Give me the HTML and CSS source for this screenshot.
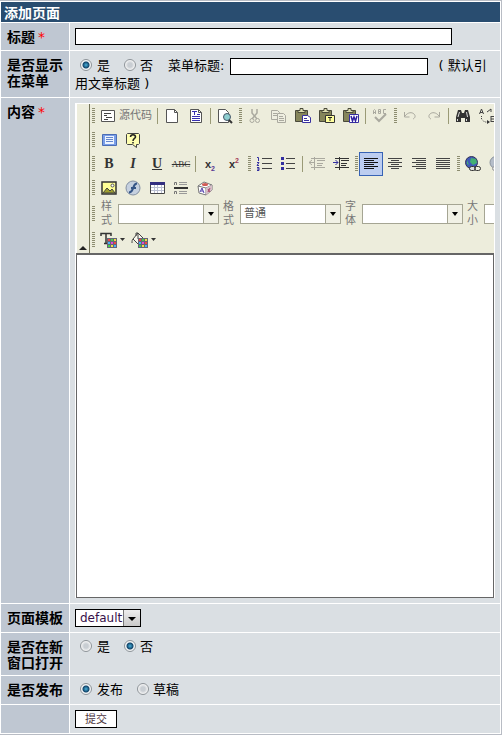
FILE: index.html
```html
<!DOCTYPE html>
<html lang="zh-CN">
<head>
<meta charset="utf-8">
<title>添加页面</title>
<link rel="stylesheet" href="styles.css">
</head>
<body>
<form class="panel">
  <h1 class="panel-title">添加页面</h1>

  <div class="row row-title">
    <label class="name" for="title">标题<span class="req">*</span></label>
    <div class="value"><input class="text title-input" id="title" type="text"></div>
  </div>

  <div class="row row-menu">
    <div class="name">是否显示在菜单</div>
    <div class="value">
      <label class="choice"><input type="radio" name="menu" checked>是</label><label class="choice"><input type="radio" name="menu">否</label><label class="menu-label" for="menu-title">菜单标题:</label><input class="text menu-input" id="menu-title" type="text"><span class="hint">( 默认引用文章标题 )</span>
    </div>
  </div>

  <div class="row row-content">
    <label class="name" for="content">内容<span class="req">*</span></label>
    <div class="value">
      <div class="editor">
        <div class="tools">
          <button class="collapse" type="button" aria-label="收起工具栏"></button>
          <div class="bars">
            <div class="bar">
              <i class="grip"></i>
              <button class="tool source" type="button"><svg width="16" height="16" viewBox="0 0 16 16"><path d="M1.500 2.500h13v11h-13z" fill="#fff" stroke="#555"/><path d="M4 5.500h7M4 7.500h3M6 9.500h6M4 11.500h4" stroke="#444"/></svg><span>源代码</span></button>
              <i class="sep"></i>
              <button class="tool" type="button" aria-label="新建"><svg width="16" height="16" viewBox="0 0 16 16"><path d="M2.500 1.500h8l3 3v10h-11z" fill="#fff" stroke="#555"/><path d="M10.500 1.500v3h3" fill="none" stroke="#555"/></svg></button>
              <button class="tool" type="button" aria-label="模板"><svg width="16" height="16" viewBox="0 0 16 16"><path d="M2.500 1.500h8l3 3v10h-11z" fill="#fff" stroke="#555"/><path d="M4 3.500h5M6.500 3v4M9 6.500h3M4 8.500h8M4 10.500h8M4 12.500h8" stroke="#3830b0"/><path d="M10.500 1.500v3h3" fill="none" stroke="#555"/></svg></button>
              <i class="sep"></i>
              <button class="tool" type="button" aria-label="预览"><svg width="16" height="16" viewBox="0 0 16 16"><path d="M1.500 1.500h7l3 3v10h-10z" fill="#fff" stroke="#555"/><circle cx="10" cy="9" r="3.500" fill="#8fcfd0" stroke="#456"/><path d="M12 12l3 3" stroke="#333" stroke-width="2"/></svg></button>
              <i class="grip"></i>
              <button class="tool" type="button" aria-label="剪切"><svg width="16" height="16" viewBox="0 0 16 16" fill="none" stroke="#aaa99f"><path d="M5 1v4l5 6M10 1v4l-5 6" stroke-width="1.500"/><circle cx="5" cy="12.500" r="2"/><circle cx="10.500" cy="12.500" r="2"/></svg></button>
              <button class="tool" type="button" aria-label="复制"><svg width="16" height="16" viewBox="0 0 16 16" fill="#eeeee0" stroke="#aaa99f"><path d="M.5 2.500h6l2 2v7h-8z"/><path d="M2 5.500h4M2 7.500h4"/><path d="M6.500 5.500h6l2 2v7h-8z"/><path d="M8 8.500h4M8 10.500h5M8 12.500h5"/></svg></button>
              <button class="tool" type="button" aria-label="粘贴"><svg width="16" height="16" viewBox="0 0 16 16"><path d="M.5 2.500h12v11h-12z" fill="#85855a" stroke="#49493a"/><path d="M3 4.500v-2h2v-2h3v2h2v2z" fill="#dedeb0" stroke="#49493a"/><path d="M7.500 7.500h5l3 2v5h-8z" fill="#fff" stroke="#3830a0"/><path d="M9 10.500h3M9 12.500h5" stroke="#3830a0"/></svg></button>
              <button class="tool" type="button" aria-label="粘贴文本"><svg width="16" height="16" viewBox="0 0 16 16"><path d="M.5 2.500h12v11h-12z" fill="#85855a" stroke="#49493a"/><path d="M3 4.500v-2h2v-2h3v2h2v2z" fill="#dedeb0" stroke="#49493a"/><path d="M6.500 7.500h9v7h-9z" fill="#ffff9c" stroke="#333"/><path d="M9 9.500h4M11 9v4" stroke="#222"/></svg></button>
              <button class="tool" type="button" aria-label="从 Word 粘贴"><svg width="16" height="16" viewBox="0 0 16 16"><path d="M.5 2.500h12v11h-12z" fill="#85855a" stroke="#49493a"/><path d="M3 4.500v-2h2v-2h3v2h2v2z" fill="#dedeb0" stroke="#49493a"/><path d="M6.500 6.500h9v8h-9z" fill="#fff" stroke="#3830a0"/><path d="M8 8l1.500 5 1.500-4 1.500 4L14 8" fill="none" stroke="#3020a0" stroke-width="1.500"/></svg></button>
              <i class="sep"></i>
              <button class="tool" type="button" aria-label="拼写检查"><svg width="16" height="16" viewBox="0 0 16 16" fill="none" stroke="#aaa99f"><path d="M1.500 6V2.500l1-1 1 1V6M1.500 4.500h2M6.500 1.500v4h2v-4zM6.500 3.500h2M14 1.500h-2.500v4H14"/><path d="M3 9l4 4 7-7" stroke-width="2"/></svg></button>
              <i class="grip"></i>
              <button class="tool" type="button" aria-label="撤销"><svg width="16" height="16" viewBox="0 0 16 16" fill="none" stroke="#aaa99f"><path d="M2.500 4v5h5M3 8c3-4 7-4 9-2s1 4-1 5"/></svg></button>
              <button class="tool" type="button" aria-label="重做"><svg width="16" height="16" viewBox="0 0 16 16" fill="none" stroke="#aaa99f"><path d="M13.500 4v5h-5M13 8c-3-4-7-4-9-2s-1 4 1 5"/></svg></button>
              <i class="sep"></i>
              <button class="tool" type="button" aria-label="查找"><svg width="16" height="16" viewBox="0 0 16 16"><path d="M3 2h3l1 3h2l1-3h3l2 7v5h-5v-4H6v4H1V9z" fill="#333"/><path d="M4.500 4L3 9M11.500 4l1 5M2.500 11v2M11.500 11v2" stroke="#ddd"/></svg></button>
              <button class="tool" type="button" aria-label="替换"><svg width="16" height="16" viewBox="0 0 16 16" fill="none" stroke="#444"><path d="M.5 6l2-5 2 5M1 4.500h3"/><path d="M2.500 8v3l3 3h4" stroke-dasharray="1 1"/><path d="M8 12l3 2-3 2z" fill="#333" stroke="none"/><path d="M8 4l4-3v3M12 8v6M12 8.500h3M12 11h3M12 13.500h3"/></svg></button>
            </div>
            <div class="bar">
              <i class="grip"></i>
              <button class="tool" type="button" aria-label="全屏"><svg width="16" height="16" viewBox="0 0 16 16"><path d="M1.500 2.500h14v11h-14z" fill="#7a9ee8" stroke="#4b6db4"/><path d="M4 4h9v8H4z" fill="#edf4ff"/><path d="M5 5.500h7M5 7.500h7M5 9.500h7" stroke="#6486cc"/></svg></button>
              <button class="tool" type="button" aria-label="关于"><svg width="16" height="16" viewBox="0 0 16 16"><path d="M2.500 1.500h11l1 1v9l-1 1h-2v3l-4-3h-5l-1-1v-9z" fill="#ffffb0" stroke="#444"/><path d="M5.500 5c0-3 5-3 5 0 0 1.500-2.500 1.500-2.500 4M8 10v1.500" fill="none" stroke="#222" stroke-width="1.500"/></svg></button>
            </div>
            <div class="bar">
              <i class="grip"></i>
              <button class="tool glyph bold" type="button">B</button>
              <button class="tool glyph italic" type="button">I</button>
              <button class="tool glyph under" type="button">U</button>
              <button class="tool glyph strike" type="button">ABC</button>
              <i class="sep"></i>
              <button class="tool script" type="button">x<sub>2</sub></button>
              <button class="tool script" type="button">x<sup>2</sup></button>
              <i class="grip"></i>
              <button class="tool" type="button" aria-label="编号列表"><svg width="16" height="16" viewBox="0 0 16 16"><path d="M6 2.500h10M6 7.500h10M6 12.500h10" stroke="#444"/><path d="M1 1.500h1.500V5M1 6.500h2l-2 3h2M1 11.500h2v3H1M1 13h2" fill="none" stroke="#332fa0"/></svg></button>
              <button class="tool" type="button" aria-label="项目列表"><svg width="16" height="16" viewBox="0 0 16 16"><path d="M6 2.500h9M6 7.500h9M6 12.500h9" stroke="#444"/><path d="M1 1h3v3H1zM1 6h3v3H1zM1 11h3v3H1z" fill="#332fa0"/></svg></button>
              <i class="sep"></i>
              <button class="tool" type="button" aria-label="减少缩进"><svg width="16" height="16" viewBox="0 0 16 16" stroke="#aaa99f"><path d="M2 2.500h14M8 4.500h8M8 7.500h6M8 9.500h5M2 11.500h14M5.500 1v13"/><path d="M0 6.500h5M3 4L0 6.500 3 9" fill="none"/></svg></button>
              <button class="tool" type="button" aria-label="增加缩进"><svg width="16" height="16" viewBox="0 0 16 16" stroke="#333"><path d="M2 2.500h14M8 4.500h8M8 7.500h6M8 9.500h5M2 11.500h14M6.500 1v13"/><path d="M0 6.500h5M2.500 4L5 6.500 2.500 9" fill="none" stroke="#332fa0"/></svg></button>
              <i class="grip"></i>
              <button class="tool active" type="button" aria-label="左对齐"><svg width="16" height="16" viewBox="0 0 16 16"><path d="M1 2.500h14M1 4.500h10M1 6.500h14M1 8.500h10M1 10.500h14M1 12.500h10" stroke="#111"/></svg></button>
              <button class="tool" type="button" aria-label="居中"><svg width="16" height="16" viewBox="0 0 16 16"><path d="M1 2.500h14M4 4.500h8M1 6.500h14M4 8.500h8M1 10.500h14M4 12.500h8" stroke="#444"/></svg></button>
              <button class="tool" type="button" aria-label="右对齐"><svg width="16" height="16" viewBox="0 0 16 16"><path d="M1 2.500h14M5 4.500h10M1 6.500h14M5 8.500h10M1 10.500h14M5 12.500h10" stroke="#444"/></svg></button>
              <button class="tool" type="button" aria-label="两端对齐"><svg width="16" height="16" viewBox="0 0 16 16"><path d="M1 2.500h14M1 4.500h14M1 6.500h14M1 8.500h14M1 10.500h14M1 12.500h14" stroke="#444"/></svg></button>
              <i class="grip"></i>
              <button class="tool" type="button" aria-label="链接"><svg width="16" height="16" viewBox="0 0 16 16"><circle cx="6.500" cy="6.500" r="6" fill="#4058b8" stroke="#335"/><path d="M6 2l5 1 1 4-4 2-3-3zM2 4l2 5-2-1z" fill="#42b072"/><rect x="4.500" y="10.500" width="6" height="4" rx="2" fill="#ddd" stroke="#333"/><rect x="9.500" y="10.500" width="6" height="4" rx="2" fill="none" stroke="#333"/></svg></button>
              <button class="tool" type="button" aria-label="取消链接"><svg width="16" height="16" viewBox="0 0 16 16"><circle cx="7" cy="6.500" r="6" fill="#b5bdc9" stroke="#8b939e"/><path d="M6 2l5 1 1 4-4 2-3-3z" fill="#dde1e0"/><rect x="3.500" y="10.500" width="6" height="4" rx="2" fill="#ddd" stroke="#999"/></svg></button>
            </div>
            <div class="bar">
              <i class="grip"></i>
              <button class="tool" type="button" aria-label="图片"><svg width="16" height="16" viewBox="0 0 16 16"><path d="M1 2h14v12H1z" fill="#ffff96" stroke="#333" stroke-width="1.500"/><path d="M2 13l4-5 3 3 2-2 3 4z" fill="#a0a030" stroke="#444"/><circle cx="11.500" cy="5.500" r="1.500" fill="#fff" stroke="#555"/></svg></button>
              <button class="tool" type="button" aria-label="Flash"><svg width="16" height="16" viewBox="0 0 16 16"><circle cx="8" cy="8" r="7" fill="#c5d0df" stroke="#8491a3"/><path d="M12 3.500c-3 0-3 3-4 5s-1 4-4 4M6 8h5" fill="none" stroke="#345586" stroke-width="2"/></svg></button>
              <button class="tool" type="button" aria-label="表格"><svg width="16" height="16" viewBox="0 0 16 16"><path d="M1.500 2.500h14v11h-14z" fill="#fff" stroke="#444"/><path d="M1 2h15v3H1z" fill="#332f80"/><path d="M5.500 5v8M8.500 5v8M12.500 5v8M2 7.500h13M2 10.500h13" stroke="#bbc0d2"/></svg></button>
              <button class="tool" type="button" aria-label="水平线"><svg width="16" height="16" viewBox="0 0 16 16"><path d="M6 2.500h8M6 4.500h8M6 11.500h8M6 13.500h8" stroke="#999"/><path d="M1.500 5V2.500h2V5M1.500 14v-2.500h2V14" fill="none" stroke="#777"/><path d="M1 8h14" stroke="#333" stroke-width="2"/></svg></button>
              <button class="tool" type="button" aria-label="特殊字符"><svg width="16" height="16" viewBox="0 0 16 16"><path d="M1 6l6-4 8 3v5l-6 5-7-2z" fill="#fff" stroke="#777"/><path d="M1 6l8 2 6-3M9 8v7" fill="none" stroke="#777"/><path d="M9 8l6-3v5l-6 5z" fill="#d6bdc8"/><ellipse cx="8" cy="4.500" rx="3" ry="1.500" fill="#d25a55"/><path d="M3 12l2-4 2 5M4 11h2" fill="none" stroke="#4e3dad"/><path d="M11 9l2 3M13 8l-2 4" stroke="#a64266"/></svg></button>
            </div>
            <div class="bar bar-selects">
              <i class="grip"></i>
              <label class="combo"><span class="combo-name">样式</span><span class="combo-box"><select><option></option></select></span></label>
              <label class="combo"><span class="combo-name">格式</span><span class="combo-box"><select><option>普通</option></select></span></label>
              <label class="combo"><span class="combo-name">字体</span><span class="combo-box"><select><option></option></select></span></label>
              <label class="combo"><span class="combo-name">大小</span><span class="combo-box"><select><option></option></select></span></label>
            </div>
            <div class="bar">
              <i class="grip"></i>
              <button class="tool color" type="button" aria-label="文本颜色"><svg width="26" height="16" viewBox="0 0 26 16"><path d="M1 4V1.500h10V4M6 1v10M4 11.500h4" fill="none" stroke="#333" stroke-width="1.500"/><path d="M7 6h10v10H7z" fill="#667"/><path d="M8 7h2v2H8zM14 10h2v2h-2z" fill="#f04444"/><path d="M11 7h2v2h-2zM8 13h2v2H8z" fill="#48d048"/><path d="M14 7h2v2h-2zM11 13h2v2h-2z" fill="#f0e048"/><path d="M8 10h2v2H8zM14 13h2v2h-2z" fill="#4ab0f8"/><path d="M11 10h2v2h-2z" fill="#e048d8"/><path d="M20 6h5l-2.500 3z" fill="#333"/></svg></button>
              <button class="tool color" type="button" aria-label="背景颜色"><svg width="26" height="16" viewBox="0 0 26 16"><path d="M7 1l6 6-6 5-5-5z" fill="#f8f8ee" stroke="#444"/><path d="M7 7V1H5v3M2 7c-1 1-1 2-1 4" fill="none" stroke="#444"/><path d="M7 6h10v10H7z" fill="#667"/><path d="M8 7h2v2H8zM14 10h2v2h-2z" fill="#f04444"/><path d="M11 7h2v2h-2zM8 13h2v2H8z" fill="#48d048"/><path d="M14 7h2v2h-2zM11 13h2v2h-2z" fill="#f0e048"/><path d="M8 10h2v2H8zM14 13h2v2h-2z" fill="#4ab0f8"/><path d="M11 10h2v2h-2z" fill="#e048d8"/><path d="M20 6h5l-2.500 3z" fill="#333"/></svg></button>
            </div>
          </div>
        </div>
        <textarea id="content"></textarea>
      </div>
    </div>
  </div>

  <div class="row">
    <label class="name" for="template">页面模板</label>
    <div class="value"><span class="template"><select id="template"><option>default</option></select></span></div>
  </div>

  <div class="row row-window">
    <div class="name">是否在新窗口打开</div>
    <div class="value"><label class="choice"><input type="radio" name="window">是</label><label class="choice"><input type="radio" name="window" checked>否</label></div>
  </div>

  <div class="row">
    <div class="name">是否发布</div>
    <div class="value"><label class="choice"><input type="radio" name="status" checked>发布</label><label class="choice"><input type="radio" name="status">草稿</label></div>
  </div>

  <div class="row">
    <div class="name"></div>
    <div class="value"><button class="submit" type="submit">提交</button></div>
  </div>
</form>
</body>
</html>
```
FILE: styles.css
```css
* { box-sizing: border-box; }

body {
  margin: 0;
  background: #fff;
  color: #000;
  font: 13px/18px "DejaVu Sans", "Noto Sans CJK SC", sans-serif;
}

button, input, select, textarea { font: inherit; color: inherit; margin: 0; border-radius: 0; }

.panel {
  display: grid;
  gap: 1px;
  margin-right: 2px;
  padding: 1px;
  border: 1px solid #b8bcc4;
  border-left: 0;
}

.panel-title {
  margin: 0;
  padding: 0 3px;
  background: #294d70;
  color: #fff;
  font: bold 14px/20px "Noto Sans CJK SC", sans-serif;
}

.row {
  display: grid;
  grid-template-columns: 68px minmax(0, 1fr);
  gap: 1px;
  min-height: 28px;
}

.name {
  padding: 5px 0 5px 6px;
  background: #bfc7d2;
  font: bold 14px/16px "Noto Sans CJK SC", sans-serif;
}

.req { margin-left: 3px; color: #f00; font-family: "DejaVu Sans", sans-serif; font-weight: normal; }

.value { padding: 5px; background: #dadfe3; }

.text {
  height: 17px;
  padding: 0 2px;
  border: 1px solid #000;
  background: #fff;
  vertical-align: middle;
}

.title-input { display: block; width: 377px; max-width: 100%; }
.menu-input { width: 198px; }

.row-title { min-height: 27px; }
.row-menu .value { padding: 6px 5px 4px; }
.row-window { min-height: 42px; }

.choice { display: inline-block; margin: 0 14px 0 5px; }
.choice:nth-of-type(n+2) { margin: 0 15px 0 0; }
.choice input {
  appearance: none;
  width: 12px;
  height: 12px;
  margin: 0 5px 3px 0;
  border: 1px solid #8e9499;
  border-radius: 50%;
  background: radial-gradient(circle, #c9ced3 30%, #f7f7f7 70%);
  vertical-align: middle;
}
.choice input:checked { background: radial-gradient(circle, #49b3dc 0, #12456b 3px, #f3f5f6 4px); }
.choice:nth-of-type(2) input { margin-right: 4px; }

.menu-label { margin-right: 6px; }
.hint { margin-left: 10px; }

.editor {
  border: 1px solid #fff;
  border-bottom: 0;
  background: #fff;
}

.tools {
  display: flex;
  height: 149px;
  margin-left: 1px;
  overflow: hidden;
  background: #ededdc;
}

.collapse {
  display: flex;
  flex: none;
  align-items: flex-end;
  justify-content: center;
  width: 13px;
  padding: 0 0 3px;
  border: 0;
  border-right: 1px solid #737357;
  background: none;
}
.collapse::before {
  content: "";
  border: 4px solid transparent;
  border-top: 0;
  border-bottom-color: #222;
}

.bars { flex: 1; min-width: 0; overflow: hidden; }
.bar { display: flex; align-items: center; height: 24px; }
.bar-selects { height: 28px; }

.grip {
  flex: none;
  width: 3px;
  height: 16px;
  margin-left: 2px;
  margin-right: 1px;
  background: repeating-linear-gradient(#8d8d70 0 1px, transparent 1px 2px);
}
.grip:first-child { margin-right: 2px; }

.sep { flex: none; width: 1px; height: 16px; margin: 0 2px; background: #9a9a76; }

.tool {
  display: flex;
  flex: none;
  align-items: center;
  justify-content: center;
  width: 24px;
  height: 24px;
  padding: 0;
  border: 0;
  background: none;
}
.source { width: 58px; gap: 3px; color: #777; font-size: 11px; }
.active { border: 1px solid #3763b5; background: #bccdf0; }
.color { width: 31px; }

.glyph { color: #333; font: bold 14px/16px "Liberation Serif", serif; }
.italic { font-style: italic; }
.under { text-decoration: underline; }
.strike { font-size: 9px; font-weight: normal; text-decoration: line-through; }
.script { display: block; color: #333; font: bold 11px/20px "Liberation Sans", sans-serif; text-align: center; }
.script sub, .script sup { color: #593a94; font-size: 7px; line-height: 0; }
.script sup { color: #a33a54; }

.combo { display: flex; flex: none; align-items: center; width: 122px; padding-left: 4px; }
.combo-name { width: 11px; margin-right: 6px; color: #777; font-size: 11px; line-height: 14px; }
.combo-box { display: flex; position: relative; width: 101px; height: 20px; }
.combo-box select {
  appearance: none;
  width: 100%;
  padding: 0 16px 0 3px;
  border: 1px solid #a5a593;
  background: linear-gradient(#a5a593, #a5a593) right 14px top / 1px 100% no-repeat, linear-gradient(#f1f1e6, #f1f1e6) right / 14px 100% no-repeat, #fff;
  color: #555;
  font-size: 11px;
}
.combo-box::after, .template::after {
  content: "";
  position: absolute;
  top: 8px;
  right: 5px;
  border: 3px solid transparent;
  border-top: 4px solid #000;
  border-bottom: 0;
  pointer-events: none;
}

textarea {
  display: block;
  width: 100%;
  height: 345px;
  padding: 4px;
  border: 1px solid #666;
  border-top: 2px solid #666;
  resize: none;
}

.template { display: inline-flex; position: relative; height: 18px; vertical-align: top; }
.template select {
  appearance: none;
  width: 66px;
  padding: 0 17px 0 4px;
  border: 1px solid #000;
  background: linear-gradient(#777, #777) right 16px top / 1px 100% no-repeat, linear-gradient(#eee, #c9c9c9) right / 16px 100% no-repeat, #fff;
  color: #38114a;
  font-size: 12px;
  line-height: 16px;
}
.template::after { border-width: 4px 4px 0; }

.submit {
  display: block;
  width: 42px;
  height: 18px;
  padding: 0;
  border: 1px solid #000;
  background: #fff;
  color: #4c3540;
  font-size: 11px;
  line-height: 15px;
}
```
